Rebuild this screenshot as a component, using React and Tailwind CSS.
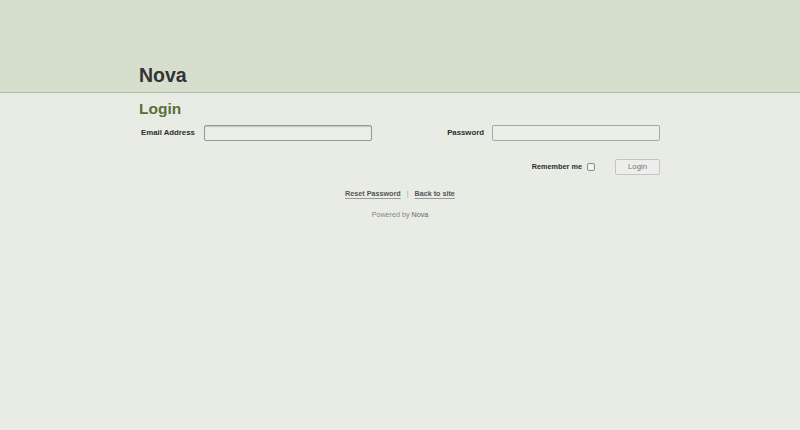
export default function App() {
  const font = { fontFamily: '"Liberation Sans", Arial, sans-serif' };
  return (
    <div className="w-[800px] h-[430px] bg-[#e8ece4] overflow-hidden" style={font}>
      <div className="h-[93px] bg-[#d6dfcd] border-b border-[#b3bca9] flex items-end">
        <div className="w-[522px] mx-auto pb-[6px]">
          <h1 className="text-[19.5px] font-bold text-[#333] leading-[22px]">Nova</h1>
        </div>
      </div>
      <div className="w-[522px] mx-auto">
        <h2 className="text-[15.5px] font-bold text-[#5b6e3b] leading-[18px] mt-[7px]">Login</h2>
        <div className="flex items-center mt-[7px] h-[16px] pr-[1px]">
          <label className="text-[7.8px] font-bold text-[#2e2e2e] w-[65px] pl-[2px] whitespace-nowrap">Email Address</label>
          <input className="w-[168px] h-[16px] bg-[#eceee8] border border-[#989893] rounded-[2px] shadow-[inset_0_1px_1px_rgba(0,0,0,0.18)]" />
          <div className="flex-1" />
          <label className="text-[7.8px] font-bold text-[#2e2e2e] mr-[8px] whitespace-nowrap">Password</label>
          <input className="w-[168px] h-[16px] bg-[#eceee8] border border-[#a6a8a2] rounded-[2px]" />
        </div>
        <div className="flex items-center justify-end mt-[18px] h-[16px] pr-[1px]">
          <span className="text-[7.3px] font-bold text-[#2e2e2e] whitespace-nowrap">Remember me</span>
          <span className="w-[8px] h-[8px] border border-[#8a8a8a] rounded-[2px] bg-[#f3f3f3] ml-[5px]" />
          <button className="ml-[20px] w-[45px] h-[16px] border border-[#c4c4c0] rounded-[2px] bg-[#ededeb] text-[7.8px] text-[#777] leading-none">Login</button>
        </div>
        <div className="flex justify-center items-center mt-[11px] text-[7.2px] font-bold text-[#555] h-[16px]">
          <a className="underline decoration-[#999] underline-offset-2">Reset Password</a>
          <span className="mx-[6px] font-normal text-[#aaa]">|</span>
          <a className="underline decoration-[#999] underline-offset-2">Back to site</a>
        </div>
        <div className="text-center text-[7.2px] text-[#888] mt-[5px] leading-[16px]">
          Powered by <span className="text-[#666]">Nova</span>
        </div>
      </div>
    </div>
  );
}
